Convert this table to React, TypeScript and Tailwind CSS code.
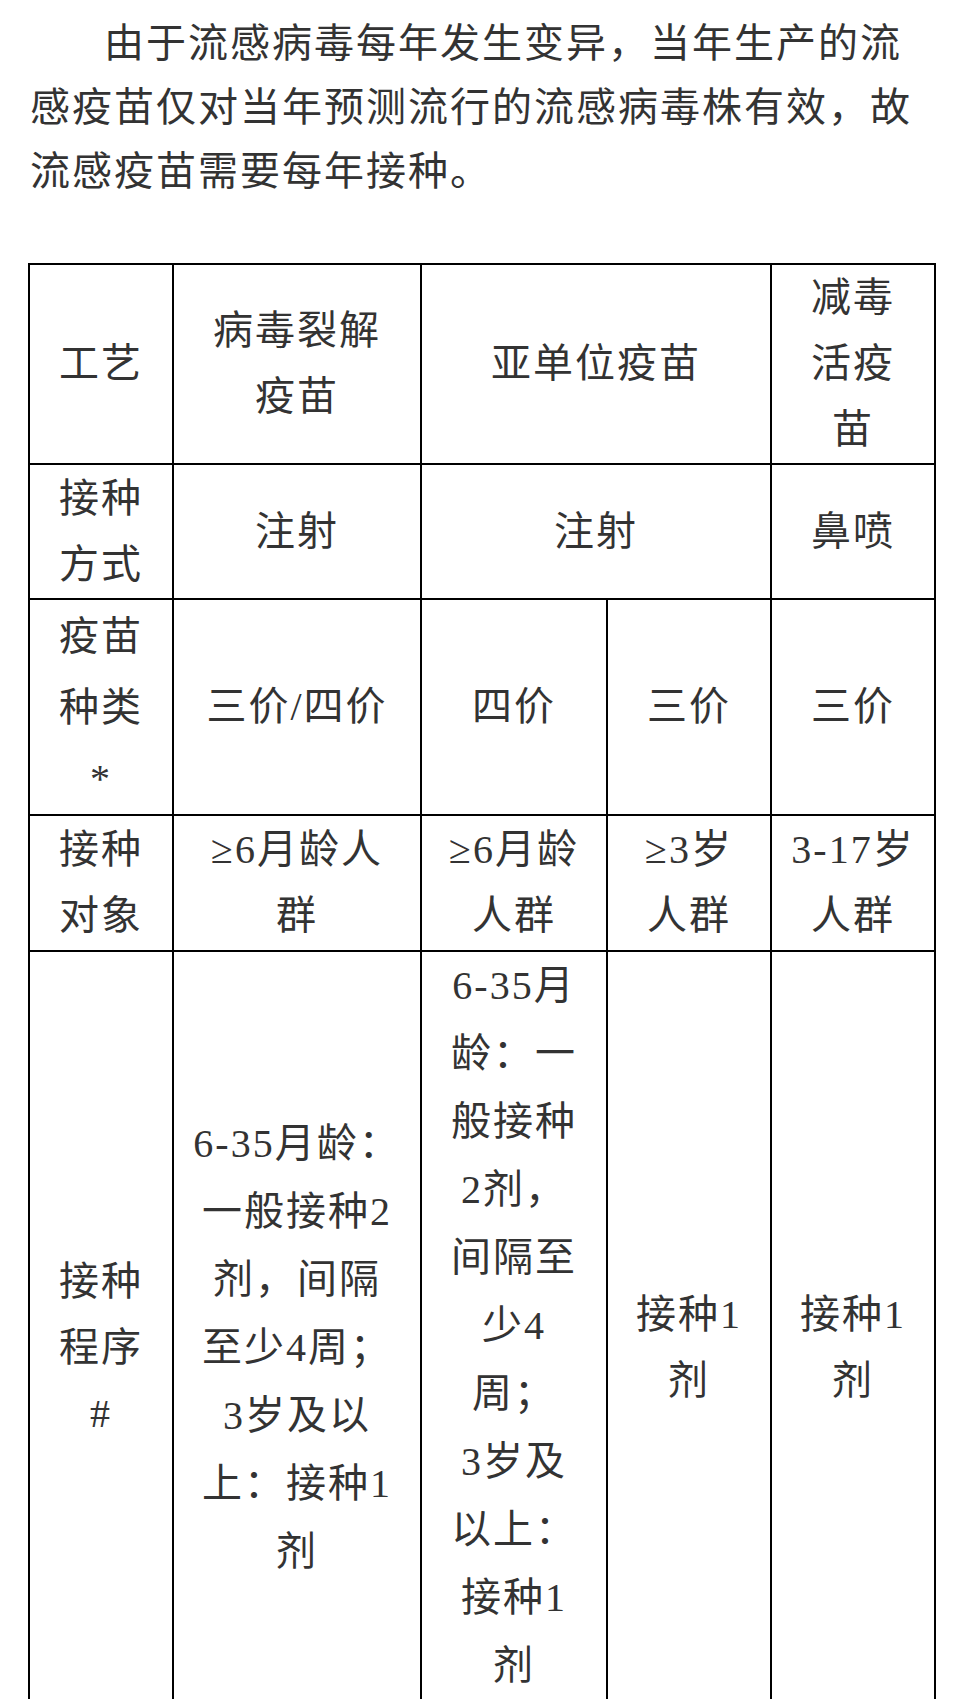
const FONT = 'font-["Liberation_Serif","Noto_Sans_CJK_SC",serif]';

type Cell = { lines: string[]; colSpan?: number; extra?: string };
type Row = { h: string; cells: Cell[] };

// 表格数据：每个单元格按原图的换行拆成多行
const ROWS: Row[] = [
  {
    h: 'h-[199px]',
    cells: [
      { lines: ['工艺'] },
      { lines: ['病毒裂解', '疫苗'] },
      { lines: ['亚单位疫苗'], colSpan: 2 },
      { lines: ['减毒', '活疫', '苗'] },
    ],
  },
  {
    h: 'h-[135px]',
    cells: [
      { lines: ['接种', '方式'] },
      { lines: ['注射'] },
      { lines: ['注射'], colSpan: 2 },
      { lines: ['鼻喷'] },
    ],
  },
  {
    h: 'h-[216px]',
    cells: [
      { lines: ['疫苗', '种类', '*'], extra: 'leading-[71px]' },
      { lines: ['三价/四价'] },
      { lines: ['四价'] },
      { lines: ['三价'] },
      { lines: ['三价'] },
    ],
  },
  {
    h: 'h-[136px]',
    cells: [
      { lines: ['接种', '对象'] },
      { lines: ['≥6月龄人', '群'] },
      { lines: ['≥6月龄', '人群'] },
      { lines: ['≥3岁', '人群'] },
      { lines: ['3-17岁', '人群'] },
    ],
  },
  {
    h: 'h-[794px]',
    cells: [
      { lines: ['接种', '程序', '#'] },
      {
        lines: ['6-35月龄：', '一般接种2', '剂，间隔', '至少4周；', '3岁及以', '上：接种1', '剂'],
        extra: 'leading-[68px]',
      },
      {
        // 这一格内容最高，原图中贴着上边框排列
        lines: ['6-35月', '龄：一', '般接种', '2剂，', '间隔至', '少4', '周；', '3岁及', '以上：', '接种1', '剂'],
        extra: 'leading-[68px] !align-top',
      },
      { lines: ['接种1', '剂'] },
      { lines: ['接种1', '剂'] },
    ],
  },
];

export default function App() {
  return (
    <div className={`w-[960px] min-h-[1699px] bg-white text-[#333] ${FONT}`}>
      {/* 说明段落 */}
      <p className="pl-[30px] pr-[30px] pt-[12px] text-[40px] leading-[64px] tracking-[2px] indent-[74px]">
        由于流感病毒每年发生变异，当年生产的流感疫苗仅对当年预测流行的流感病毒株有效，故流感疫苗需要每年接种。
      </p>

      {/* 疫苗对比表 */}
      <table className="ml-[28px] mt-[59px] w-[906px] table-fixed border-collapse text-[40px] leading-[66px] tracking-[2px]">
        <colgroup>
          <col className="w-[144px]" />
          <col className="w-[248px]" />
          <col className="w-[186px]" />
          <col className="w-[164px]" />
          <col className="w-[164px]" />
        </colgroup>
        <tbody>
          {ROWS.map((row, ri) => (
            <tr key={ri} className={row.h}>
              {row.cells.map((cell, ci) => (
                <td
                  key={ci}
                  colSpan={cell.colSpan}
                  className={`border-2 border-black p-0 text-center align-middle ${cell.extra ?? ''}`}
                >
                  {cell.lines.map((line, li) => (
                    <div key={li} className="whitespace-nowrap">
                      {line}
                    </div>
                  ))}
                </td>
              ))}
            </tr>
          ))}
        </tbody>
      </table>
    </div>
  );
}
